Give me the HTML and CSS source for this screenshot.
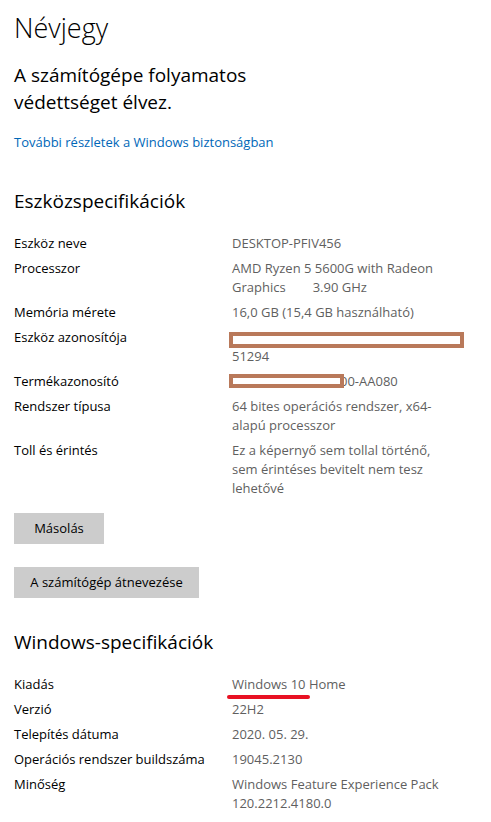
FILE: index.html
```html
<!DOCTYPE html>
<html lang="hu">
<head>
<meta charset="utf-8">
<title>Névjegy</title>
<link rel="stylesheet" href="styles.css">
</head>
<body>
<main class="page">
  <h1 class="title">Névjegy</h1>
  <p class="status">A számítógépe folyamatos<br>védettséget élvez.</p>
  <a class="link" href="#">További részletek a Windows biztonságban</a>

  <h2 class="section-title first">Eszközspecifikációk</h2>
  <dl class="specs">
    <dt>Eszköz neve</dt>
    <dd>DESKTOP-PFIV456</dd>
    <dt>Processzor</dt>
    <dd class="pre">AMD Ryzen 5 5600G with Radeon<br>Graphics        3.90 GHz</dd>
    <dt>Memória mérete</dt>
    <dd>16,0 GB (15,4 GB használható)</dd>
    <dt>Eszköz azonosítója</dt>
    <dd><div class="line"><span class="redact redact-long"></span></div>51294</dd>
    <dt>Termékazonosító</dt>
    <dd class="row-flex"><span class="redact redact-short"></span><span class="tail">00-AA080</span></dd>
    <dt>Rendszer típusa</dt>
    <dd>64 bites operációs rendszer, x64-<br>alapú processzor</dd>
    <dt>Toll és érintés</dt>
    <dd>Ez a képernyő sem tollal történő,<br>sem érintéses bevitelt nem tesz<br>lehetővé</dd>
  </dl>

  <div class="buttons">
    <button class="btn btn-copy">Másolás</button>
    <button class="btn btn-rename">A számítógép átnevezése</button>
  </div>

  <h2 class="section-title second">Windows-specifikációk</h2>
  <dl class="specs">
    <dt>Kiadás</dt>
    <dd class="marked">Windows 10 Home<span class="underline"></span></dd>
    <dt>Verzió</dt>
    <dd>22H2</dd>
    <dt>Telepítés dátuma</dt>
    <dd>2020. 05. 29.</dd>
    <dt>Operációs rendszer buildszáma</dt>
    <dd>19045.2130</dd>
    <dt>Minőség</dt>
    <dd>Windows Feature Experience Pack<br>120.2212.4180.0</dd>
  </dl>
</main>
</body>
</html>
```

FILE: styles.css
```css
* { box-sizing: border-box; }

html, body {
  margin: 0;
  padding: 0;
  background: #ffffff;
}

body {
  font-family: "Open Sans", "Noto Sans", "Liberation Sans", sans-serif;
  color: #000000;
  font-size: 13px;
}

.page {
  padding: 10px 14px 0 14px;
  display: flex;
  flex-direction: column;
  align-items: flex-start;
}

.title {
  margin: 0;
  font-size: 27px;
  line-height: 36px;
  font-weight: 300;
  color: #000;
}

.status {
  margin: 16px 0 0 0;
  font-size: 19px;
  line-height: 27px;
  font-weight: 400;
}

.link {
  margin-top: 17px;
  font-size: 13px;
  line-height: 19px;
  color: #0067b8;
  text-decoration: none;
}

.section-title {
  margin: 0;
  font-size: 19px;
  line-height: 27px;
  font-weight: 400;
}

.section-title.first { margin-top: 36px; }
.section-title.second { margin-top: 31px; }

.specs {
  margin: 19px 0 0 0;
  display: grid;
  grid-template-columns: 218px 1fr;
  row-gap: 6px;
  font-size: 13px;
  line-height: 19px;
  width: 100%;
}

.specs dt {
  margin: 0;
  color: #000;
}

.specs dd {
  margin: 0;
  color: #5f5f5f;
  position: relative;
}

.pre { white-space: pre; }

.line {
  height: 19px;
  padding-top: 4px;
}

.redact {
  display: block;
  background: #ffffff;
  border: 4px solid #b9795a;
}

.redact-long {
  width: 235px;
  height: 16px;
  margin-left: -3px;
}

.row-flex {
  display: flex;
  align-items: flex-start;
}

.redact-short {
  width: 115px;
  height: 14px;
  margin: 2px 0 0 -3px;
  position: relative;
  z-index: 1;
  flex: none;
}

.tail { margin-left: -4px; }

.underline {
  position: absolute;
  left: -5px;
  top: 20px;
  width: 83px;
  height: 4px;
  border-radius: 2px;
  background: #e81123;
}

.buttons {
  display: flex;
  flex-direction: column;
  align-items: flex-start;
  gap: 23px;
  margin-top: 15px;
}

.btn {
  font-family: inherit;
  font-size: 13px;
  line-height: 19px;
  color: #000;
  background: #cccccc;
  border: none;
  height: 31px;
  padding: 0 10px;
  margin: 0;
  text-align: center;
}

.btn-copy { width: 90px; }
.btn-rename { width: 185px; }
```
